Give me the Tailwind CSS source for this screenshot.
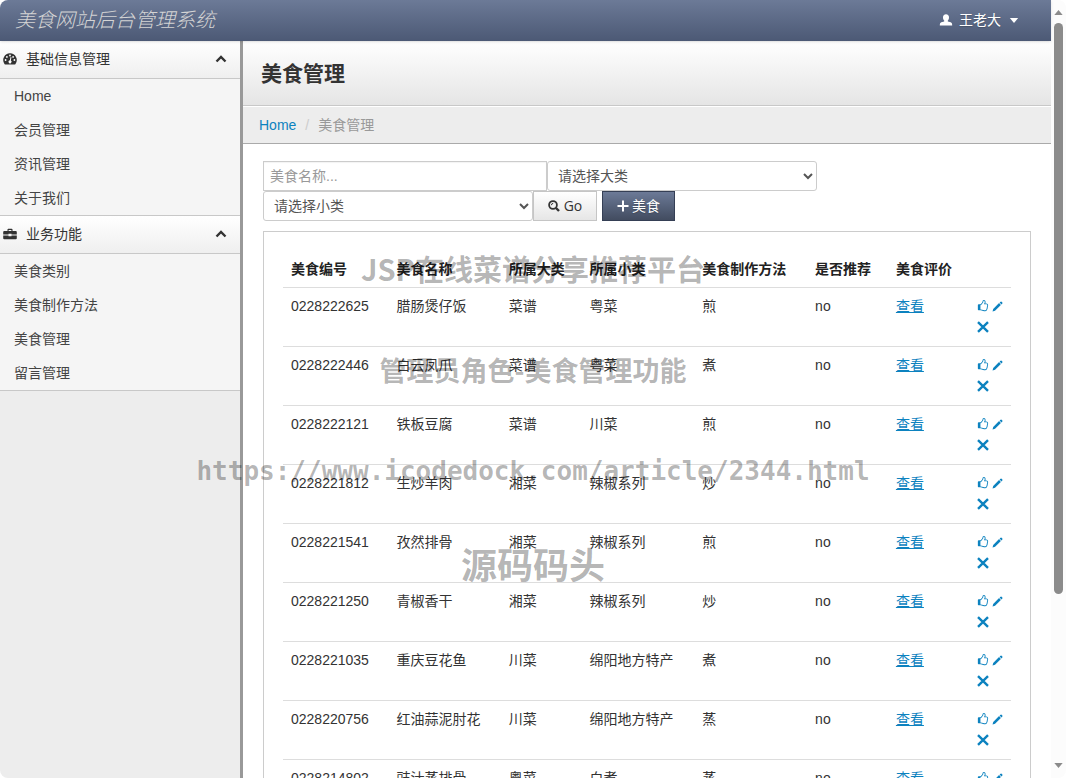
<!DOCTYPE html>
<html lang="zh-CN">
<head>
<meta charset="utf-8">
<meta name="viewport" content="width=device-width, initial-scale=1">
<title>美食网站后台管理系统</title>
<script src="https://cdn.jsdelivr.net/npm/@tailwindcss/browser@4"></script>
</head>
<body class="h-screen overflow-hidden bg-white text-sm/5 text-[#333] font-['Liberation_Sans','Noto_Sans_CJK_SC',sans-serif]">
<svg class="hidden" aria-hidden="true">
  <symbol id="up" viewBox="0 0 12 12"><path d="M1.500 8.500 6 4l4.500 4.500" fill="none" stroke="currentColor" stroke-width="2.400"/></symbol>
  <symbol id="thumb" viewBox="0 0 1792 1792"><path fill="currentColor" d="M128 768h330v704H128zM1536 768q0-51-39-89.500t-89-38.500h-352q0-58 48-159.500t48-160.500q0-98-32-145t-128-47q-26 26-38 85t-30.500 125.500-59.500 109.500q-22 23-77 91-4 5-23 30t-31.500 41-34.500 42.500-40 44-38.500 35.500-40 27-35.500 9h-32v640h32q13 0 31.500 3t33 6.500 38 11 35 11.500 35.500 12.500 29 10.500q211 73 342 73h121q192 0 192-167 0-26-5-56 30-16 47.500-52.500t17.500-73.500-18-69q53-50 53-119 0-25-10-55.500t-25-47.500q32-1 53.500-47t21.500-81zm128-1q0 89-49 163 9 33 9 69 0 77-38 144 3 21 3 43 0 101-60 178 1 139-85 219.500t-227 80.500h-129q-96 0-189.500-22.500t-216.500-65.500q-116-40-138-40h-288q-53 0-90.500-37.500t-37.500-90.500v-640q0-53 37.500-90.500t90.500-37.500h274q36-24 137-155 58-75 107-128 24-25 35.500-85.500t30.500-126.500 62-108q39-37 90-37 84 0 151 32.500t102 101.500 35 186q0 93-48 192h176q104 0 180 76t76 179z"/></symbol>
  <symbol id="pencil" viewBox="0 0 12 12"><path fill="currentColor" d="M.6 11.500 1.300 8.700 7.700 2.300l2 2-6.400 6.400zM8.300 1.700 9.400.700q.5-.4 1 0l.9.9q.4.5 0 1l-1 1.100z"/></symbol>
  <symbol id="cross" viewBox="0 0 12 12"><path d="M1 1.200l10 9.600M11 1.200l-10 9.600" stroke="currentColor" stroke-width="2.400"/></symbol>
</svg>

<div class="relative flex h-full overflow-hidden rounded-lg">
  <div class="flex min-w-0 flex-1 flex-col">
    <header class="z-10 flex h-[41px] shrink-0 items-center justify-between bg-linear-to-b from-[#6c7a97] to-[#4c5975] pr-8 pl-[15px] pb-px shadow-sm">
      <a href="#" class="text-xl font-light italic text-[#d4d4d4]">美食网站后台管理系统</a>
      <button type="button" class="flex items-center text-white text-shadow-xs">
        <svg class="mr-1.5 h-3 w-3.5" viewBox="0 0 14 12" fill="currentColor" aria-hidden="true"><path d="M7 .3c1.900 0 3 1.300 3 3.100 0 1.400-.5 2.500-1.200 3.200v.8l2.900.9c1.100.4 1.500 1.200 1.500 3.200H.8c0-2 .4-2.800 1.500-3.200l2.900-.9v-.8C4.500 5.900 4 4.800 4 3.400 4 1.600 5.100.3 7 .3z"/></svg>
        王老大
        <svg class="ml-2 h-[5px] w-[10px]" viewBox="0 0 10 6" fill="currentColor" aria-hidden="true"><path d="M0 0h10L5 6z"/></svg>
      </button>
    </header>

    <div class="flex min-h-0 flex-1">
      <nav class="w-[243px] shrink-0 border-r-3 border-[#999] bg-[#ededed] text-[#444]">
        <button type="button" class="flex h-[38px] w-full items-center border-b border-[#c8c8c8] bg-linear-to-b from-white to-[#efefef] pr-[13px] pb-px pl-[3px] text-[#333]">
          <svg class="mr-[9px] h-3 w-3.5" viewBox="0 0 14 12" aria-hidden="true"><path fill="currentColor" d="M7 .3a6.700 6.700 0 0 1 5.500 10.600q-.4.600-1 .6h-9q-.6 0-1-.6A6.700 6.700 0 0 1 7 .3z"/><g fill="#fff"><circle cx="2.600" cy="7" r=".9"/><circle cx="3.900" cy="3.900" r=".9"/><circle cx="7" cy="2.500" r=".9"/><circle cx="10.100" cy="3.900" r=".9"/><circle cx="11.400" cy="7" r=".9"/><path d="M7.600 4l.9.200-.7 3.300a1.500 1.500 0 1 1-1-.2z"/></g></svg>
          基础信息管理
          <svg class="ml-auto h-3 w-3" aria-hidden="true"><use href="#up"/></svg>
        </button>
        <ul class="border-b border-[#c8c8c8] bg-[#f5f5f5] leading-[34px]">
          <li><a href="#" class="block pl-3.5">Home</a></li>
          <li><a href="#" class="block pl-3.5">会员管理</a></li>
          <li><a href="#" class="block pl-3.5">资讯管理</a></li>
          <li><a href="#" class="block pl-3.5">关于我们</a></li>
        </ul>
        <button type="button" class="flex h-[38px] w-full items-center border-b border-[#c8c8c8] bg-linear-to-b from-white to-[#efefef] pr-[13px] pb-px pl-[3px] text-[#333]">
          <svg class="mr-[9px] h-3 w-3.5" viewBox="0 0 14 12" fill="currentColor" aria-hidden="true"><path d="M4.500 3V1.600q0-.8.800-.8h3.400q.8 0 .8.800V3h3.300q1 0 1 1v2.600H8.500v-.8h-3v.8H.2V4q0-1 1-1zM5.600 3h2.800V1.900H5.600zM.2 7.400h5.300v.9h3v-.9h5.300v2.900q0 .9-1 .9H1.200q-1 0-1-.9z"/></svg>
          业务功能
          <svg class="ml-auto h-3 w-3" aria-hidden="true"><use href="#up"/></svg>
        </button>
        <ul class="border-b border-[#c8c8c8] bg-[#f5f5f5] leading-[34px]">
          <li><a href="#" class="block pl-3.5">美食类别</a></li>
          <li><a href="#" class="block pl-3.5">美食制作方法</a></li>
          <li><a href="#" class="block pl-3.5">美食管理</a></li>
          <li><a href="#" class="block pl-3.5">留言管理</a></li>
        </ul>
      </nav>

      <main class="min-w-0 flex-1 overflow-hidden bg-white">
        <div class="flex h-[65px] items-center border-b border-[#c8c8c8] bg-linear-to-b from-white to-[#e5e5e5] px-[18px] pt-0.5">
          <h1 class="text-[21px] font-bold text-[#333]">美食管理</h1>
        </div>
        <ol class="flex h-[38px] items-center border-t border-b border-t-white border-b-[#aaa] bg-[#ededed] px-4 text-[#999]">
          <li><a href="#" class="text-[#0c82bf]">Home</a></li>
          <li class="px-[9px] text-[#ccc]" aria-hidden="true">/</li>
          <li>美食管理</li>
        </ol>

        <div class="px-5 pt-[17px]">
          <form class="flex flex-wrap items-center" onsubmit="return false">
            <input type="text" aria-label="美食名称" placeholder="美食名称..." class="h-[30px] w-[284px] border border-[#ccc] bg-white px-1.5 text-[#555] inset-shadow-xs placeholder:text-[#999]">
            <select aria-label="大类" class="h-[30px] w-[270px] rounded-[3px] border border-[#ccc] bg-white px-1.5 text-[#555]"><option>请选择大类</option></select>
            <select aria-label="小类" class="h-[30px] w-[270px] rounded-[3px] border border-[#ccc] bg-white px-1.5 text-[#555]"><option>请选择小类</option></select>
            <button type="submit" class="mr-[5px] flex h-[30px] w-16 items-center justify-center gap-1 border border-[#c5c5c5] bg-linear-to-b from-white to-[#e6e6e6] font-['Open_Sans','Noto_Sans_CJK_SC',sans-serif] text-[#333]">
              <svg class="h-3 w-3" viewBox="0 0 12 12" fill="none" stroke="currentColor" aria-hidden="true"><circle cx="5" cy="5" r="3.900" stroke-width="1.800"/><path d="M8 8l3 3" stroke-width="2.400"/><path d="M3.400 5.200q0-1.800 1.800-1.800" stroke-width="1"/></svg>
              Go
            </button>
            <button type="button" class="flex h-[30px] w-[73px] items-center justify-center gap-[3px] border border-[#353f55] bg-linear-to-b from-[#6c7a97] to-[#424c60] text-white text-shadow-xs">
              <svg class="h-3 w-3" viewBox="0 0 12 12" aria-hidden="true"><path d="M6 .5v11M.5 6h11" stroke="currentColor" stroke-width="2"/></svg>
              美食
            </button>
          </form>

          <div class="mt-2.5 border border-[#ccc] px-[19px] py-[19px]">
            <table class="w-full table-fixed text-left">
              <colgroup>
                <col class="w-[14.5%]"><col class="w-[15.4%]"><col class="w-[11.1%]"><col class="w-[15.5%]"><col class="w-[15.5%]"><col class="w-[11.1%]"><col class="w-[11.1%]"><col class="w-[5.8%]">
              </colgroup>
              <thead>
                <tr class="whitespace-nowrap text-[#222]">
                  <th class="p-2">美食编号</th><th class="p-2">美食名称</th><th class="p-2">所属大类</th><th class="p-2">所属小类</th><th class="p-2">美食制作方法</th><th class="p-2">是否推荐</th><th class="p-2">美食评价</th><td class="p-2"></td>
                </tr>
              </thead>
              <tbody id="rows"></tbody>
            </table>
          </div>
        </div>
      </main>
    </div>
  </div>

  <div class="flex w-[15px] shrink-0 flex-col items-center bg-[#fcfcfc] py-2.5 text-[#8b8b8b]" aria-hidden="true">
    <svg class="h-[5px] w-[9px] shrink-0" viewBox="0 0 10 6" fill="currentColor"><path d="M5 0l5 6H0z"/></svg>
    <div class="my-2 w-full flex-1"><div class="mx-auto h-[78%] w-[9px] rounded-full bg-[#8b8b8b]"></div></div>
    <svg class="h-[5px] w-[9px] shrink-0" viewBox="0 0 10 6" fill="currentColor"><path d="M0 0h10L5 6z"/></svg>
  </div>

  <!-- Watermark overlay -->
  <div class="pointer-events-none absolute inset-x-0 top-0 z-20 font-['Noto_Sans_CJK_SC',sans-serif] font-bold whitespace-nowrap text-black/30">
    <p class="absolute inset-x-0 top-[248px] text-center text-[29px]/10">JSP在线菜谱分享推荐平台</p>
    <p class="absolute inset-x-0 top-[350px] text-center text-[27px]/10">管理员角色-美食管理功能</p>
    <p class="absolute inset-x-0 top-[451px] text-center font-['DejaVu_Sans_Mono',monospace] text-[26px]/10">https://www.icodedock.com/article/2344.html</p>
    <p class="absolute inset-x-0 top-[543px] text-center text-[36px]/10">源码码头</p>
  </div>
</div>

<script>
const foods = [
  ['0228222625', '腊肠煲仔饭', '菜谱', '粤菜', '煎'],
  ['0228222446', '白云凤爪', '菜谱', '粤菜', '煮'],
  ['0228222121', '铁板豆腐', '菜谱', '川菜', '煎'],
  ['0228221812', '生炒羊肉', '湘菜', '辣椒系列', '炒'],
  ['0228221541', '孜然排骨', '湘菜', '辣椒系列', '煎'],
  ['0228221250', '青椒香干', '湘菜', '辣椒系列', '炒'],
  ['0228221035', '重庆豆花鱼', '川菜', '绵阳地方特产', '煮'],
  ['0228220756', '红油蒜泥肘花', '川菜', '绵阳地方特产', '蒸'],
  ['0228214802', '豉汁蒸排骨', '粤菜', '白煮', '蒸'],
];
document.getElementById('rows').innerHTML = foods.map(food => `
  <tr class="border-t border-[#ddd] align-top whitespace-nowrap">
    ${food.map(text => `<td class="p-2">${text}</td>`).join('')}
    <td class="p-2">no</td>
    <td class="p-2"><a href="#" class="text-[#0c82bf] underline">查看</a></td>
    <td class="p-2 text-[#0c82bf]">
      <div class="flex flex-wrap gap-x-[3px]">
        <a href="#" aria-label="推荐" class="flex h-[21px] items-center pb-px"><svg class="h-3 w-3"><use href="#thumb"/></svg></a>
        <a href="#" aria-label="编辑" class="flex h-[21px] items-center pb-px"><svg class="h-[11px] w-[11px]"><use href="#pencil"/></svg></a>
        <a href="#" aria-label="删除" class="flex h-[21px] items-center pb-px"><svg class="h-3 w-3"><use href="#cross"/></svg></a>
      </div>
    </td>
  </tr>`).join('');
</script>
</body>
</html>
